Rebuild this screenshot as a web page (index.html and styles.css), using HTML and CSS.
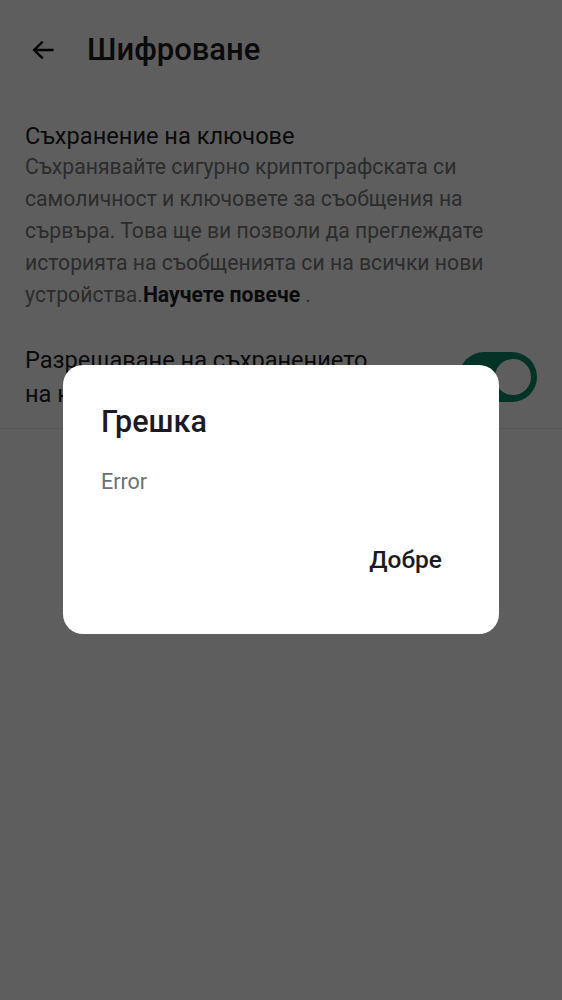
FILE: index.html
```html
<!DOCTYPE html>
<html lang="bg">
<head>
<meta charset="utf-8">
<link rel="stylesheet" href="styles.css">
</head>
<body>
<div class="screen">
  <header class="appbar">
    <svg class="back" width="28" height="28" viewBox="0 0 24 24"><path d="M20 12H5M11 5.5L4.5 12L11 18.5" fill="none" stroke="#000" stroke-width="2.1" stroke-linecap="square"/></svg>
    <h1 class="title">Шифроване</h1>
  </header>
  <section class="setting">
    <h2 class="s-title">Съхранение на ключове</h2>
    <p class="s-desc">Съхранявайте сигурно криптографската си самоличност и ключовете за съобщения на сървъра. Това ще ви позволи да преглеждате историята на съобщенията си на всички нови устройства.<b>Научете повече</b> .</p>
  </section>
  <section class="toggle-row">
    <div class="toggle-label">Разрешаване на съхранението на ключове</div>
    <div class="switch"><span class="thumb"></span></div>
  </section>
  <div class="divider"></div>
</div>
<div class="scrim"></div>
<div class="dialog" role="dialog">
  <h3 class="d-title">Грешка</h3>
  <p class="d-msg">Error</p>
  <div class="d-actions"><button class="d-btn">Добре</button></div>
</div>
</body>
</html>
```
FILE: styles.css
```css
html, body { margin: 0; padding: 0; }
body {
  width: 562px;
  height: 1000px;
  background: #fff;
  font-family: Roboto, "Noto Sans", sans-serif;
  overflow: hidden;
  position: relative;
}
.screen { display: flex; flex-direction: column; }
.appbar {
  display: flex;
  align-items: center;
  height: 100px;
  padding-left: 29px;
  gap: 30px;
}
.back { flex: none; }
.title {
  margin: 0;
  font-size: 31px;
  font-weight: 500;
  color: #1b1b1b;
  margin-top: -1px;
}
.setting { padding: 21px 25px 0 25px; }
.s-title {
  margin: 0;
  font-size: 23.6px;
  font-weight: 400;
  color: #1b1b1b;
  line-height: 30px;
}
.s-desc {
  margin: 0;
  font-size: 21.2px;
  line-height: 32px;
  color: #777;
}
.s-desc b { color: #1b1b1b; font-weight: 700; }
.toggle-row {
  display: flex;
  align-items: center;
  justify-content: space-between;
  padding: 32px 25px 17px 25px;
}
.toggle-label {
  width: 372px;
  font-size: 23.6px;
  line-height: 34px;
  color: #1b1b1b;
}
.switch {
  width: 78px;
  height: 50px;
  border-radius: 25px;
  background: #088a67;
  display: flex;
  align-items: center;
  justify-content: flex-end;
  padding-right: 6px;
  box-sizing: border-box;
}
.thumb {
  width: 36px;
  height: 36px;
  border-radius: 50%;
  background: #fff;
}
.divider { height: 1px; background: #e6e6e6; }
.scrim {
  position: fixed;
  inset: 0;
  background: rgba(0,0,0,0.63);
}
.dialog {
  position: absolute;
  left: 63px;
  top: 365px;
  width: 436px;
  height: 269px;
  box-sizing: border-box;
  background: #fff;
  border-radius: 20px;
  padding: 39px 38px 0 38px;
  display: flex;
  flex-direction: column;
}
.d-title {
  margin: 0;
  font-size: 30.5px;
  font-weight: 500;
  color: #1b1b1f;
  line-height: 36px;
}
.d-msg {
  margin: 30px 0 0 0;
  font-size: 21.5px;
  line-height: 24px;
  color: #6b7079;
}
.d-actions { display: flex; justify-content: flex-end; margin-top: 51px; }
.d-btn {
  border: 0;
  background: none;
  padding: 0 19px 0 0;
  font-family: Roboto, "Noto Sans", sans-serif;
  font-size: 24.5px;
  font-weight: 500;
  color: #1b1b1f;
  line-height: 30px;
}
```
